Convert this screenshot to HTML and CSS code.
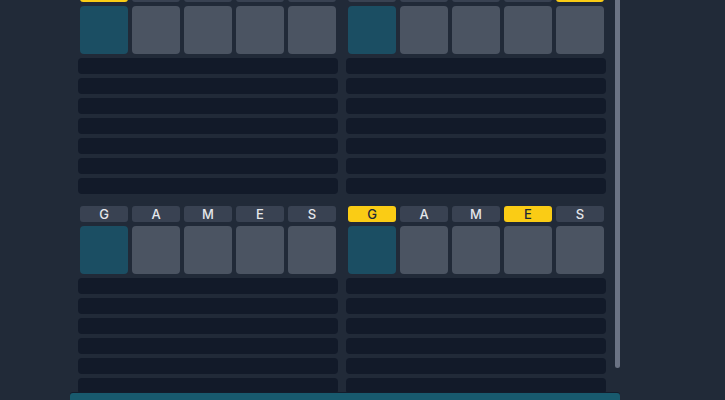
FILE: index.html
```html
<!DOCTYPE html>
<html>
<head>
<meta charset="utf-8">
<link rel="stylesheet" href="styles.css">
</head>
<body>
<div class="app">
  <div class="boards">
    <div class="board">
      <div class="letters">
        <span class="letter hit">G</span><span class="letter">A</span><span class="letter">M</span><span class="letter">E</span><span class="letter">S</span>
      </div>
      <div class="tiles">
        <div class="tile teal"></div><div class="tile"></div><div class="tile"></div><div class="tile"></div><div class="tile"></div>
      </div>
      <div class="row"></div><div class="row"></div><div class="row"></div><div class="row"></div><div class="row"></div><div class="row"></div><div class="row"></div>
    </div>
    <div class="board">
      <div class="letters">
        <span class="letter">G</span><span class="letter">A</span><span class="letter">M</span><span class="letter">E</span><span class="letter hit">S</span>
      </div>
      <div class="tiles">
        <div class="tile teal"></div><div class="tile"></div><div class="tile"></div><div class="tile"></div><div class="tile"></div>
      </div>
      <div class="row"></div><div class="row"></div><div class="row"></div><div class="row"></div><div class="row"></div><div class="row"></div><div class="row"></div>
    </div>
    <div class="board">
      <div class="letters">
        <span class="letter">G</span><span class="letter">A</span><span class="letter">M</span><span class="letter">E</span><span class="letter">S</span>
      </div>
      <div class="tiles">
        <div class="tile teal"></div><div class="tile"></div><div class="tile"></div><div class="tile"></div><div class="tile"></div>
      </div>
      <div class="row"></div><div class="row"></div><div class="row"></div><div class="row"></div><div class="row"></div><div class="row"></div><div class="row"></div>
    </div>
    <div class="board">
      <div class="letters">
        <span class="letter hit">G</span><span class="letter">A</span><span class="letter">M</span><span class="letter hit">E</span><span class="letter">S</span>
      </div>
      <div class="tiles">
        <div class="tile teal"></div><div class="tile"></div><div class="tile"></div><div class="tile"></div><div class="tile"></div>
      </div>
      <div class="row"></div><div class="row"></div><div class="row"></div><div class="row"></div><div class="row"></div><div class="row"></div><div class="row"></div>
    </div>
  </div>
  <div class="scrollbar"></div>
</div>
<div class="footer"></div>
</body>
</html>
```

FILE: styles.css
```css
html, body {
  margin: 0;
  padding: 0;
  background: #212a38;
  font-family: Inter, "Noto Sans", sans-serif;
}

.app {
  display: flex;
  align-items: flex-start;
  height: 400px;
  overflow: hidden;
  padding-left: 78px;
}

.boards {
  width: 528px;
  display: grid;
  grid-template-columns: 260px 260px;
  column-gap: 8px;
  row-gap: 12px;
  margin-top: -14px;
}

.board {
  display: flex;
  flex-direction: column;
  gap: 4px;
}

.letters,
.tiles {
  display: flex;
  gap: 4px;
  padding: 0 2px;
}

.letter {
  width: 48px;
  height: 16px;
  line-height: 16px;
  text-align: center;
  font-size: 13px;
  font-weight: 500;
  color: #e5e7eb;
  background: #394252;
  border-radius: 3px;
}

.letter.hit {
  background: #facc15;
  color: #1f2937;
}

.tile {
  width: 48px;
  height: 48px;
  background: #4b5462;
  border-radius: 4px;
}

.tile.teal {
  background: #1b4e63;
}

.row {
  height: 16px;
  background: #121a29;
  border-radius: 4px;
}

.scrollbar {
  width: 5px;
  height: 368px;
  margin-left: 9px;
  background: #6b7384;
  border-radius: 0 0 3px 3px;
}

.footer {
  position: fixed;
  left: 70px;
  top: 393px;
  width: 550px;
  height: 10px;
  background: #185a6e;
  border-radius: 3px 3px 0 0;
  box-shadow: 0 -1px 0 #131c2b;
}
```
